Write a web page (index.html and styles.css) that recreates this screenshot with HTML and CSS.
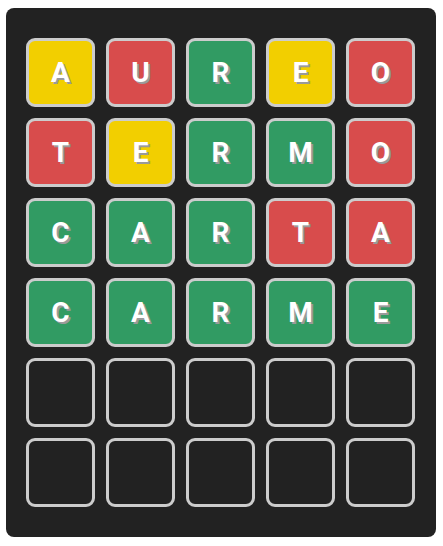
FILE: index.html
```html
<!DOCTYPE html>
<html>
<head>
<meta charset="utf-8">
<link rel="stylesheet" href="styles.css">
</head>
<body>
<div class="board">
  <div class="tile yellow">A</div>
  <div class="tile red">U</div>
  <div class="tile green">R</div>
  <div class="tile yellow">E</div>
  <div class="tile red">O</div>

  <div class="tile red">T</div>
  <div class="tile yellow">E</div>
  <div class="tile green">R</div>
  <div class="tile green">M</div>
  <div class="tile red">O</div>

  <div class="tile green">C</div>
  <div class="tile green">A</div>
  <div class="tile green">R</div>
  <div class="tile red">T</div>
  <div class="tile red">A</div>

  <div class="tile green">C</div>
  <div class="tile green">A</div>
  <div class="tile green">R</div>
  <div class="tile green">M</div>
  <div class="tile green">E</div>

  <div class="tile"></div>
  <div class="tile"></div>
  <div class="tile"></div>
  <div class="tile"></div>
  <div class="tile"></div>

  <div class="tile"></div>
  <div class="tile"></div>
  <div class="tile"></div>
  <div class="tile"></div>
  <div class="tile"></div>
</div>
</body>
</html>
```
FILE: styles.css
```css
html, body {
  margin: 0;
  padding: 0;
  background: #ffffff;
}

body {
  font-family: Roboto, "Liberation Sans", sans-serif;
}

.board {
  margin: 8px 0 0 6px;
  width: 430px;
  height: 529px;
  box-sizing: border-box;
  padding: 30px 20px;
  background: #222222;
  border-radius: 8px;
  display: grid;
  grid-template-columns: repeat(5, 69px);
  grid-template-rows: repeat(6, 69px);
  gap: 11px;
}

.tile {
  box-sizing: border-box;
  border: 3px solid #cccccc;
  border-radius: 9px;
  background: #222222;
  display: flex;
  align-items: center;
  justify-content: center;
  color: #ffffff;
  font-weight: 700;
  font-size: 28px;
  line-height: 1;
  text-shadow: 2px 2px 0 #9a9a9a;
}

.yellow { background: #f2cf00; }
.red { background: #d84c4c; }
.green { background: #319b63; }
```
